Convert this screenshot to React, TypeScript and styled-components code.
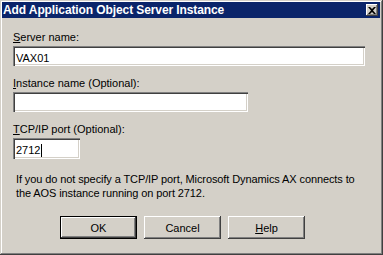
import * as React from 'react';
import styled, { createGlobalStyle } from 'styled-components';

const GlobalStyle = createGlobalStyle`
    html, body {
        margin: 0;
        padding: 0;
        background: #d4d0c8;
    }
    body {
        font-family: Tahoma, 'Liberation Sans', Arial, sans-serif;
        font-size: 11px;
        color: #000;
    }
`;

const App: React.FC = () => {
    return (
        <>
            <GlobalStyle />
            <Window>
                <TitleBar>
                    <Title>Add Application Object Server Instance</Title>
                    <CloseButton aria-label="Close">
                        <svg width="8" height="7" viewBox="0 0 8 7">
                            <path d="M0 0h2l2 2 2-2h2L5 3.5 8 7H6L4 5 2 7H0l3-3.5z" fill="#000" />
                        </svg>
                    </CloseButton>
                </TitleBar>
                <Body>
                    <Label>
                        <u>S</u>erver name:
                    </Label>
                    <Field width={352}>VAX01</Field>
                    <Label gap={11}>
                        <u>I</u>nstance name (Optional):
                    </Label>
                    <Field width={235} />
                    <Label gap={11}>
                        <u>T</u>CP/IP port (Optional):
                    </Label>
                    <Field width={67} tall>
                        2712
                        <Caret />
                    </Field>
                    <Note>
                        If you do not specify a TCP/IP port, Microsoft Dynamics AX connects to the AOS instance running
                        on port 2712.
                    </Note>
                    <ButtonRow>
                        <Button isDefault>OK</Button>
                        <Button>Cancel</Button>
                        <Button>
                            <u>H</u>elp
                        </Button>
                    </ButtonRow>
                </Body>
            </Window>
        </>
    );
};

const Window = styled.div`
    box-sizing: border-box;
    width: 383px;
    height: 255px;
    padding: 2px 3px 3px 2px;
    background: #d4d0c8;
    box-shadow: inset -1px -1px 0 #404040, inset 1px 1px 0 #d4d0c8, inset -2px -2px 0 #808080,
        inset 2px 2px 0 #ffffff;
    display: flex;
    flex-direction: column;
`;

const TitleBar = styled.div`
    height: 16px;
    background: #0a246a;
    display: flex;
    align-items: center;
    justify-content: space-between;
    padding: 0 2px 0 1px;
`;

const Title = styled.span`
    color: #fff;
    font-weight: bold;
    font-size: 12px;
    letter-spacing: -0.1px;
    line-height: 16px;
    white-space: nowrap;
`;

const CloseButton = styled.div`
    box-sizing: border-box;
    width: 12px;
    height: 12px;
    background: #d4d0c8;
    display: flex;
    align-items: center;
    justify-content: center;
    box-shadow: inset -1px -1px 0 #404040, inset 1px 1px 0 #ffffff, inset -2px -2px 0 #808080;
`;

const Body = styled.div`
    display: flex;
    flex-direction: column;
    align-items: flex-start;
    padding: 13px 0 0 11px;
`;

const Label = styled.div<{ gap?: number }>`
    line-height: 13px;
    margin-top: ${(p) => p.gap ?? 0}px;
    margin-bottom: 2px;
    white-space: nowrap;
`;

const Field = styled.div<{ width: number; tall?: boolean }>`
    box-sizing: border-box;
    width: ${(p) => p.width}px;
    height: ${(p) => (p.tall ? 21 : 20)}px;
    background: #fff;
    padding: 3px 3px 0 3px;
    line-height: 14px;
    display: flex;
    align-items: center;
    box-shadow: inset 1px 1px 0 #808080, inset 2px 2px 0 #404040, inset -1px -1px 0 #ffffff,
        inset -2px -2px 0 #d4d0c8;
    white-space: nowrap;
`;

const Caret = styled.span`
    display: inline-block;
    width: 1px;
    height: 13px;
    margin-left: 1px;
    background: #000;
`;

const Note = styled.p`
    margin: 13px 0 0 3px;
    width: 350px;
    line-height: 14px;
    letter-spacing: -0.1px;
`;

const ButtonRow = styled.div`
    display: flex;
    gap: 7px;
    margin: 16px 0 0 47px;
`;

const Button = styled.div<{ isDefault?: boolean }>`
    box-sizing: border-box;
    width: 77px;
    height: 23px;
    display: flex;
    align-items: center;
    justify-content: center;
    background: #d4d0c8;
    box-shadow: ${(p) =>
        p.isDefault
            ? 'inset 0 0 0 1px #000, inset -2px -2px 0 #404040, inset 2px 2px 0 #ffffff, inset -3px -3px 0 #808080'
            : 'inset -1px -1px 0 #404040, inset 1px 1px 0 #ffffff, inset -2px -2px 0 #808080'};
`;

export default App;
